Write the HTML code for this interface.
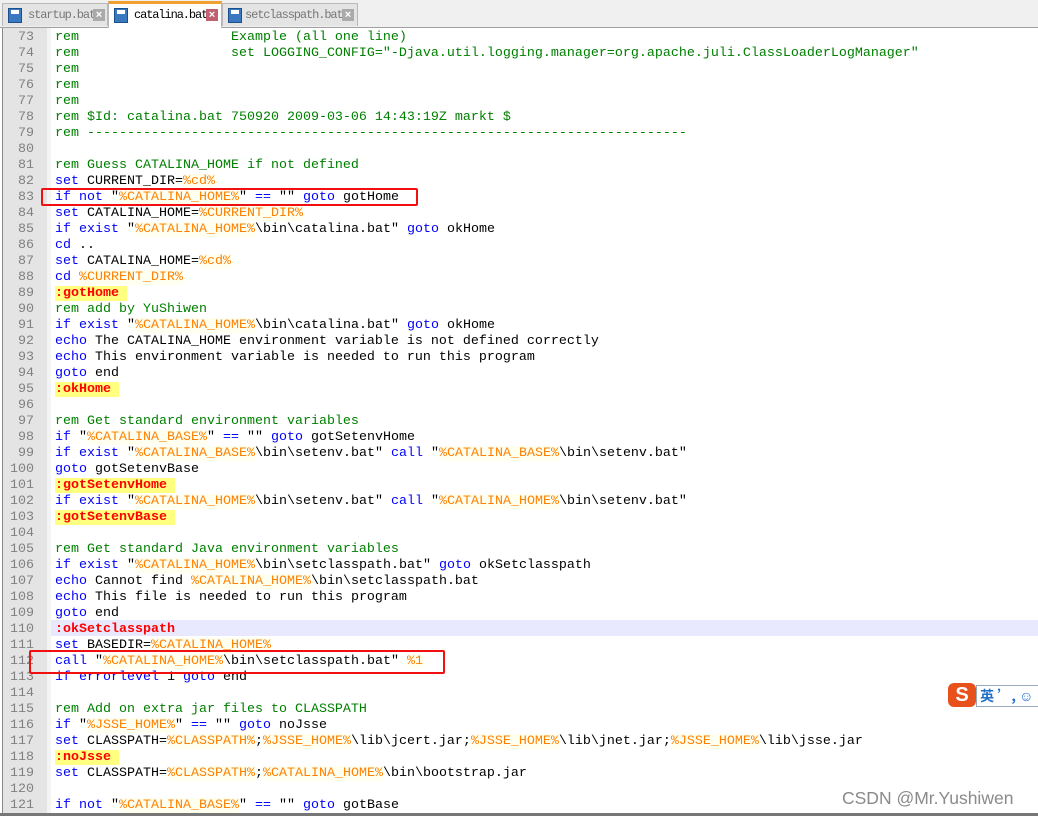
<!DOCTYPE html>
<html><head><meta charset="utf-8"><style>
html,body{margin:0;padding:0;width:1038px;height:816px;overflow:hidden;background:#fff;font-family:"Liberation Mono",monospace;}
#tabs{position:absolute;left:0;top:0;width:1038px;height:27px;background:#f0f0f0;border-bottom:1px solid #a0a0a0;}
.tab{position:absolute;top:3px;height:22px;background:#e4e4e4;border:1px solid #b8b8b8;border-bottom:none;font:12px "Liberation Mono",monospace;letter-spacing:-1.1px;color:#777;line-height:22px;}
.tab.act{top:1px;height:24px;background:#fff;border-top:3px solid #f0a030;color:#000;line-height:22px;}
.ico{position:absolute;left:5px;top:4px;width:12px;height:13px;background:#3a78c0;border:1px solid #1d4f8a;}
.ico:after{content:"";position:absolute;left:2px;top:1px;width:8px;height:4px;background:#fff;}
.x{position:absolute;top:5px;width:12px;height:12px;background:#aaa;color:#fff;font:bold 11px/12px "Liberation Sans",sans-serif;letter-spacing:0;text-align:center;}
#ed{position:absolute;left:2px;top:28px;width:1036px;height:788px;border-left:1px solid #888;}
#gut{position:absolute;left:3px;top:28px;width:44px;height:788px;background:#e4e4e4;}
#fold{position:absolute;left:47px;top:28px;width:4px;height:788px;background:#f4f4f4;}
.ln{position:absolute;left:0;width:1038px;height:16px;font-size:13.33px;line-height:16px;white-space:pre;}
.n{position:absolute;left:0;width:34px;text-align:right;color:#808080;}
.t{position:absolute;left:55px;color:#000;}
.k{color:#0000ff;}
.v{color:#ff8000;background:#fffff0;}
.c{color:#008000;}
.l{color:#ff0000;background:#ffff80;font-weight:bold;}
.box{position:absolute;border:2px solid #f01010;border-radius:2px;}
#code{position:absolute;left:0;top:2px;}
</style></head><body>
<div id="tabs">
<div class="tab" style="left:2px;width:104px;"><div class="ico"></div><span style="position:absolute;left:25px;">startup.bat</span><div class="x" style="left:90px;">×</div></div>
<div class="tab act" style="left:108px;width:112px;"><div class="ico"></div><span style="position:absolute;left:25px;">catalina.bat</span><div class="x" style="left:97px;background:#c06070;">×</div></div>
<div class="tab" style="left:222px;width:134px;"><div class="ico"></div><span style="position:absolute;left:22px;">setclasspath.bat</span><div class="x" style="left:119px;">×</div></div>
</div>
<div id="ed"></div><div id="gut"></div><div id="fold"></div>
<div style="position:absolute;left:51px;top:620px;width:987px;height:16px;background:#e8e8ff;"></div>
<div id="code">
<div class="ln" style="top:28px"><span class="n">73</span><span class="t"><span class="c">rem                   Example (all one line)</span></span></div>
<div class="ln" style="top:44px"><span class="n">74</span><span class="t"><span class="c">rem                   set LOGGING_CONFIG="-Djava.util.logging.manager=org.apache.juli.ClassLoaderLogManager"</span></span></div>
<div class="ln" style="top:60px"><span class="n">75</span><span class="t"><span class="c">rem</span></span></div>
<div class="ln" style="top:76px"><span class="n">76</span><span class="t"><span class="c">rem</span></span></div>
<div class="ln" style="top:92px"><span class="n">77</span><span class="t"><span class="c">rem</span></span></div>
<div class="ln" style="top:108px"><span class="n">78</span><span class="t"><span class="c">rem $Id: catalina.bat 750920 2009-03-06 14:43:19Z markt $</span></span></div>
<div class="ln" style="top:124px"><span class="n">79</span><span class="t"><span class="c">rem ---------------------------------------------------------------------------</span></span></div>
<div class="ln" style="top:140px"><span class="n">80</span></div>
<div class="ln" style="top:156px"><span class="n">81</span><span class="t"><span class="c">rem Guess CATALINA_HOME if not defined</span></span></div>
<div class="ln" style="top:172px"><span class="n">82</span><span class="t"><span class="k">set</span> CURRENT_DIR=<span class="v">%cd%</span></span></div>
<div class="ln" style="top:188px"><span class="n">83</span><span class="t"><span class="k">if not</span> "<span class="v">%CATALINA_HOME%</span>" <span class="k">==</span> "" <span class="k">goto</span> gotHome</span></div>
<div class="ln" style="top:204px"><span class="n">84</span><span class="t"><span class="k">set</span> CATALINA_HOME=<span class="v">%CURRENT_DIR%</span></span></div>
<div class="ln" style="top:220px"><span class="n">85</span><span class="t"><span class="k">if exist</span> "<span class="v">%CATALINA_HOME%</span>\bin\catalina.bat" <span class="k">goto</span> okHome</span></div>
<div class="ln" style="top:236px"><span class="n">86</span><span class="t"><span class="k">cd</span> ..</span></div>
<div class="ln" style="top:252px"><span class="n">87</span><span class="t"><span class="k">set</span> CATALINA_HOME=<span class="v">%cd%</span></span></div>
<div class="ln" style="top:268px"><span class="n">88</span><span class="t"><span class="k">cd</span> <span class="v">%CURRENT_DIR%</span></span></div>
<div class="ln" style="top:284px"><span class="n">89</span><span class="t"><span class="l">:gotHome </span></span></div>
<div class="ln" style="top:300px"><span class="n">90</span><span class="t"><span class="c">rem add by YuShiwen</span></span></div>
<div class="ln" style="top:316px"><span class="n">91</span><span class="t"><span class="k">if exist</span> "<span class="v">%CATALINA_HOME%</span>\bin\catalina.bat" <span class="k">goto</span> okHome</span></div>
<div class="ln" style="top:332px"><span class="n">92</span><span class="t"><span class="k">echo</span> The CATALINA_HOME environment variable is not defined correctly</span></div>
<div class="ln" style="top:348px"><span class="n">93</span><span class="t"><span class="k">echo</span> This environment variable is needed to run this program</span></div>
<div class="ln" style="top:364px"><span class="n">94</span><span class="t"><span class="k">goto</span> end</span></div>
<div class="ln" style="top:380px"><span class="n">95</span><span class="t"><span class="l">:okHome </span></span></div>
<div class="ln" style="top:396px"><span class="n">96</span></div>
<div class="ln" style="top:412px"><span class="n">97</span><span class="t"><span class="c">rem Get standard environment variables</span></span></div>
<div class="ln" style="top:428px"><span class="n">98</span><span class="t"><span class="k">if</span> "<span class="v">%CATALINA_BASE%</span>" <span class="k">==</span> "" <span class="k">goto</span> gotSetenvHome</span></div>
<div class="ln" style="top:444px"><span class="n">99</span><span class="t"><span class="k">if exist</span> "<span class="v">%CATALINA_BASE%</span>\bin\setenv.bat" <span class="k">call</span> "<span class="v">%CATALINA_BASE%</span>\bin\setenv.bat"</span></div>
<div class="ln" style="top:460px"><span class="n">100</span><span class="t"><span class="k">goto</span> gotSetenvBase</span></div>
<div class="ln" style="top:476px"><span class="n">101</span><span class="t"><span class="l">:gotSetenvHome </span></span></div>
<div class="ln" style="top:492px"><span class="n">102</span><span class="t"><span class="k">if exist</span> "<span class="v">%CATALINA_HOME%</span>\bin\setenv.bat" <span class="k">call</span> "<span class="v">%CATALINA_HOME%</span>\bin\setenv.bat"</span></div>
<div class="ln" style="top:508px"><span class="n">103</span><span class="t"><span class="l">:gotSetenvBase </span></span></div>
<div class="ln" style="top:524px"><span class="n">104</span></div>
<div class="ln" style="top:540px"><span class="n">105</span><span class="t"><span class="c">rem Get standard Java environment variables</span></span></div>
<div class="ln" style="top:556px"><span class="n">106</span><span class="t"><span class="k">if exist</span> "<span class="v">%CATALINA_HOME%</span>\bin\setclasspath.bat" <span class="k">goto</span> okSetclasspath</span></div>
<div class="ln" style="top:572px"><span class="n">107</span><span class="t"><span class="k">echo</span> Cannot find <span class="v">%CATALINA_HOME%</span>\bin\setclasspath.bat</span></div>
<div class="ln" style="top:588px"><span class="n">108</span><span class="t"><span class="k">echo</span> This file is needed to run this program</span></div>
<div class="ln" style="top:604px"><span class="n">109</span><span class="t"><span class="k">goto</span> end</span></div>
<div class="ln" style="top:620px"><span class="n">110</span><span class="t"><span style="color:#ff0000;font-weight:bold;">:okSetclasspath</span></span></div>
<div class="ln" style="top:636px"><span class="n">111</span><span class="t"><span class="k">set</span> BASEDIR=<span class="v">%CATALINA_HOME%</span></span></div>
<div class="ln" style="top:652px"><span class="n">112</span><span class="t"><span class="k">call</span> "<span class="v">%CATALINA_HOME%</span>\bin\setclasspath.bat" <span class="v">%1</span></span></div>
<div class="ln" style="top:668px"><span class="n">113</span><span class="t"><span class="k">if errorlevel</span> 1 <span class="k">goto</span> end</span></div>
<div class="ln" style="top:684px"><span class="n">114</span></div>
<div class="ln" style="top:700px"><span class="n">115</span><span class="t"><span class="c">rem Add on extra jar files to CLASSPATH</span></span></div>
<div class="ln" style="top:716px"><span class="n">116</span><span class="t"><span class="k">if</span> "<span class="v">%JSSE_HOME%</span>" <span class="k">==</span> "" <span class="k">goto</span> noJsse</span></div>
<div class="ln" style="top:732px"><span class="n">117</span><span class="t"><span class="k">set</span> CLASSPATH=<span class="v">%CLASSPATH%</span>;<span class="v">%JSSE_HOME%</span>\lib\jcert.jar;<span class="v">%JSSE_HOME%</span>\lib\jnet.jar;<span class="v">%JSSE_HOME%</span>\lib\jsse.jar</span></div>
<div class="ln" style="top:748px"><span class="n">118</span><span class="t"><span class="l">:noJsse </span></span></div>
<div class="ln" style="top:764px"><span class="n">119</span><span class="t"><span class="k">set</span> CLASSPATH=<span class="v">%CLASSPATH%</span>;<span class="v">%CATALINA_HOME%</span>\bin\bootstrap.jar</span></div>
<div class="ln" style="top:780px"><span class="n">120</span></div>
<div class="ln" style="top:796px"><span class="n">121</span><span class="t"><span class="k">if not</span> "<span class="v">%CATALINA_BASE%</span>" <span class="k">==</span> "" <span class="k">goto</span> gotBase</span></div>
</div>
<div class="box" style="left:41px;top:188px;width:373px;height:14px;"></div>
<div class="box" style="left:29px;top:650px;width:412px;height:20px;"></div>
<div style="position:absolute;left:948px;top:683px;width:28px;height:24px;background:#e8501c;border-radius:6px;color:#fff;font:bold 20px/24px 'Liberation Sans',sans-serif;text-align:center;">S</div>
<div style="position:absolute;left:976px;top:685px;width:62px;height:20px;border:1px solid #9ab;border-right:none;background:#fff;font:bold 14px/20px 'Noto Sans CJK SC',sans-serif;color:#1e6fc8;white-space:nowrap;">&nbsp;英 ’, ☺</div>
<div style="position:absolute;left:842px;top:788px;font:17.5px 'Liberation Sans',sans-serif;color:#8a8a8a;">CSDN @Mr.Yushiwen</div>
<div style="position:absolute;left:0;top:813px;width:1038px;height:3px;background:#777;"></div>
</body></html>
